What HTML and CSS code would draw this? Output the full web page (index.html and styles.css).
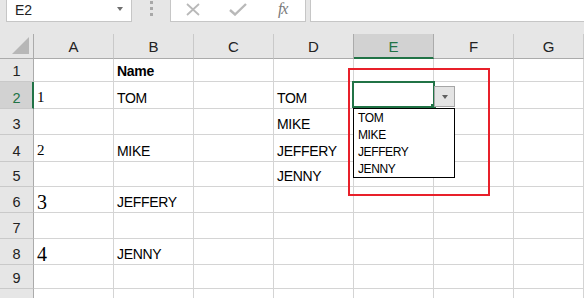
FILE: index.html
```html
<!DOCTYPE html>
<html lang="en">
<head>
  <meta charset="UTF-8" />
  <title>Data Validation List</title>
  <link rel="stylesheet" href="styles.css">
</head>
<body>

  <div class="topbar">
    <div class="namebox"><span>E2</span><span class="nb-arrow"></span></div>
    <div class="grip"><i></i><i></i><i></i></div>
    <div class="fbuttons">
      <span class="fb">
        <svg width="14" height="13" viewBox="0 0 14 13"><path d="M1 1 L13 12 M13 1 L1 12" stroke="#b9b9b9" stroke-width="1.8" fill="none"/></svg>
      </span>
      <span class="fb">
        <svg width="18" height="13" viewBox="0 0 18 13"><path d="M1 7 L6 11.5 L17 1" stroke="#b9b9b9" stroke-width="2.4" fill="none"/></svg>
      </span>
      <span class="fb fx">fx</span>
    </div>
    <div class="finput"></div>
  </div>

  <div class="sheet">
    <div class="hd corner">
      <svg width="18" height="18" viewBox="0 0 18 18"><polygon points="17,0 17,17 0,17" fill="#b7b7b7"/></svg>
    </div>
    <div class="hd">A</div>
    <div class="hd">B</div>
    <div class="hd">C</div>
    <div class="hd near">D</div>
    <div class="hd on">E</div>
    <div class="hd">F</div>
    <div class="hd">G</div>

    <div class="rh">1</div>
    <div class="c"></div><div class="c bold">Name</div><div class="c"></div><div class="c"></div><div class="c"></div><div class="c"></div><div class="c"></div>

    <div class="rh on">2</div>
    <div class="c num">1</div><div class="c">TOM</div><div class="c"></div><div class="c">TOM</div><div class="c"></div><div class="c"></div><div class="c"></div>

    <div class="rh">3</div>
    <div class="c"></div><div class="c"></div><div class="c"></div><div class="c">MIKE</div><div class="c"></div><div class="c"></div><div class="c"></div>

    <div class="rh">4</div>
    <div class="c num">2</div><div class="c">MIKE</div><div class="c"></div><div class="c">JEFFERY</div><div class="c"></div><div class="c"></div><div class="c"></div>

    <div class="rh">5</div>
    <div class="c"></div><div class="c"></div><div class="c"></div><div class="c">JENNY</div><div class="c"></div><div class="c"></div><div class="c"></div>

    <div class="rh">6</div>
    <div class="c num big">3</div><div class="c">JEFFERY</div><div class="c"></div><div class="c"></div><div class="c"></div><div class="c"></div><div class="c"></div>

    <div class="rh">7</div>
    <div class="c"></div><div class="c"></div><div class="c"></div><div class="c"></div><div class="c"></div><div class="c"></div><div class="c"></div>

    <div class="rh">8</div>
    <div class="c num big">4</div><div class="c">JENNY</div><div class="c"></div><div class="c"></div><div class="c"></div><div class="c"></div><div class="c"></div>

    <div class="rh">9</div>
    <div class="c"></div><div class="c"></div><div class="c"></div><div class="c"></div><div class="c"></div><div class="c"></div><div class="c"></div>

    <div class="rh">10</div>
    <div class="c"></div><div class="c"></div><div class="c"></div><div class="c"></div><div class="c"></div><div class="c"></div><div class="c"></div>
  </div>

  <!-- selected cell with its validation dropdown -->
  <div class="active-cell"></div>
  <div class="fill-handle"></div>
  <div class="dd-btn"><span></span></div>
  <ul class="dd-list">
    <li>TOM</li>
    <li>MIKE</li>
    <li>JEFFERY</li>
    <li>JENNY</li>
  </ul>

  <div class="annot"></div>

</body>
</html>
```

FILE: styles.css
```css
* {
  box-sizing: border-box;
}

body {
  margin: 0;
  width: 584px;
  height: 298px;
  overflow: hidden;
  position: relative;
  font-family: "Liberation Sans", Arial, sans-serif;
  background: #fff;
  color: #000;
}

/* formula bar */
.topbar {
  background: #e6e6e6;
  height: 34px;
  padding: 0 0 12px 6px;
  display: flex;
}

.namebox {
  width: 126px;
  height: 22px;
  background: #fff;
  border: 1px solid #c6c6c6;
  border-top: none;
  display: flex;
  align-items: center;
  justify-content: space-between;
  padding: 0 8px 2px 8px;
  font-size: 14px;
  color: #222;
}

.nb-arrow {
  border-left: 3.5px solid transparent;
  border-right: 3.5px solid transparent;
  border-top: 4px solid #6f6f6f;
  margin-bottom: 2px;
}

.grip {
  width: 38px;
  display: flex;
  flex-direction: column;
  align-items: center;
  gap: 3px;
  padding-top: 1px;
}

.grip i {
  width: 3px;
  height: 3px;
  background: #a8a8a8;
}

.fbuttons {
  width: 136px;
  height: 22px;
  background: #fff;
  border: 1px solid #c6c6c6;
  border-top: none;
  display: grid;
  grid-template-columns: repeat(3, 1fr);
  align-items: center;
  padding-bottom: 3px;
}

.fb {
  display: flex;
  justify-content: center;
}

.fx {
  font-family: "Liberation Serif", serif;
  font-style: italic;
  font-size: 16px;
  color: #7a7a7a;
  letter-spacing: -1px;
}

.finput {
  flex: 1;
  margin-left: 4px;
  height: 22px;
  background: #fff;
  border: 1px solid #c6c6c6;
  border-top: none;
  border-right: none;
}

/* grid */
.sheet {
  display: grid;
  grid-template-columns: 34px repeat(6, 80px) 1fr;
  grid-template-rows: 25px 23px 27px 26px 27px 25px 26px 26px 26px 24px 26px;
}

.hd {
  background: #e6e6e6;
  border-right: 1px solid #c9c9c9;
  border-bottom: 1px solid #ababab;
  display: flex;
  align-items: center;
  justify-content: center;
  font-size: 15px;
  color: #222;
  padding-top: 1px;
}

.hd.corner {
  align-items: flex-end;
  justify-content: flex-end;
  padding: 0 3px 3px 0;
  border-right-color: #ababab;
}

.hd.near {
  border-right-color: #ababab;
}

.hd.on {
  background: #d2d2d2;
  color: #217346;
  border-right-color: #ababab;
  border-bottom: 2px solid #217346;
  padding-top: 2px;
}

.rh {
  background: #e6e6e6;
  border-right: 1px solid #ababab;
  border-bottom: 1px solid #c9c9c9;
  display: flex;
  align-items: flex-end;
  justify-content: center;
  font-size: 14.5px;
  color: #222;
  padding-bottom: 2px;
}

.rh.on {
  background: #d2d2d2;
  color: #217346;
  border-right: 2px solid #217346;
  padding-left: 1px;
}

.c {
  border-right: 1px solid #d4d4d4;
  border-bottom: 1px solid #d4d4d4;
  display: flex;
  align-items: flex-end;
  padding: 0 3px 2px;
  font-size: 14px;
  letter-spacing: -0.3px;
  white-space: nowrap;
}

.c.bold {
  font-weight: bold;
}

.c.num {
  font-family: "Liberation Serif", serif;
  font-size: 15px;
  letter-spacing: 0;
}

.c.big {
  font-size: 20px;
  line-height: 1;
  padding-bottom: 0;
}

/* selection + validation list */
.active-cell {
  position: absolute;
  left: 352px;
  top: 81px;
  width: 83px;
  height: 27px;
  border: 2px solid #217346;
}

.fill-handle {
  position: absolute;
  left: 431px;
  top: 104px;
  width: 5px;
  height: 5px;
  background: #217346;
}

.dd-btn {
  position: absolute;
  left: 434px;
  top: 86px;
  width: 21px;
  height: 21px;
  background: #e4e4e4;
  border: 1px solid #a6a6a6;
  display: flex;
  align-items: center;
  justify-content: center;
}

.dd-btn span {
  border-left: 3.5px solid transparent;
  border-right: 3.5px solid transparent;
  border-top: 4px solid #606060;
}

.dd-list {
  position: absolute;
  left: 353px;
  top: 108px;
  width: 102px;
  height: 70px;
  margin: 0;
  padding: 1px 0 0 4px;
  list-style: none;
  background: #fff;
  border: 1px solid #000;
  font-size: 12px;
  letter-spacing: -0.4px;
  line-height: 17px;
}

/* red highlight box */
.annot {
  position: absolute;
  left: 348px;
  top: 68px;
  width: 142px;
  height: 128px;
  border: 2px solid #e8202a;
}
```
